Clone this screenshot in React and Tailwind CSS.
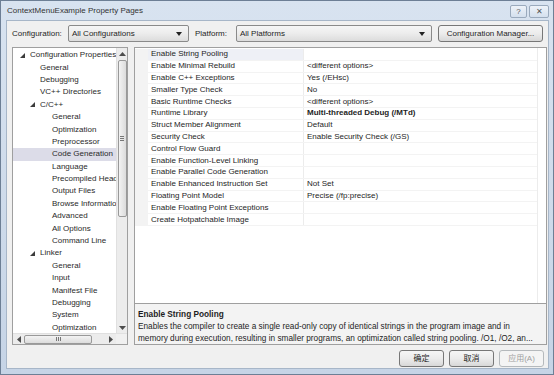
import React from 'react';

const font = { fontFamily: '"Liberation Sans", Arial, sans-serif' };

const treeItems = [
  { label: 'Configuration Properties', level: 0, open: true },
  { label: 'General', level: 1 },
  { label: 'Debugging', level: 1 },
  { label: 'VC++ Directories', level: 1 },
  { label: 'C/C++', level: 1, open: true },
  { label: 'General', level: 2 },
  { label: 'Optimization', level: 2 },
  { label: 'Preprocessor', level: 2 },
  { label: 'Code Generation', level: 2, selected: true },
  { label: 'Language', level: 2 },
  { label: 'Precompiled Headers', level: 2 },
  { label: 'Output Files', level: 2 },
  { label: 'Browse Information', level: 2 },
  { label: 'Advanced', level: 2 },
  { label: 'All Options', level: 2 },
  { label: 'Command Line', level: 2 },
  { label: 'Linker', level: 1, open: true },
  { label: 'General', level: 2 },
  { label: 'Input', level: 2 },
  { label: 'Manifest File', level: 2 },
  { label: 'Debugging', level: 2 },
  { label: 'System', level: 2 },
  { label: 'Optimization', level: 2 },
];

const props = [
  ['Enable String Pooling', ''],
  ['Enable Minimal Rebuild', '<different options>'],
  ['Enable C++ Exceptions', 'Yes (/EHsc)'],
  ['Smaller Type Check', 'No'],
  ['Basic Runtime Checks', '<different options>'],
  ['Runtime Library', 'Multi-threaded Debug (/MTd)', true],
  ['Struct Member Alignment', 'Default'],
  ['Security Check', 'Enable Security Check (/GS)'],
  ['Control Flow Guard', ''],
  ['Enable Function-Level Linking', ''],
  ['Enable Parallel Code Generation', ''],
  ['Enable Enhanced Instruction Set', 'Not Set'],
  ['Floating Point Model', 'Precise (/fp:precise)'],
  ['Enable Floating Point Exceptions', ''],
  ['Create Hotpatchable Image', ''],
];

const Expander = () => (
  <svg width="5" height="5" viewBox="0 0 5 5" className="shrink-0">
    <polygon points="5,0 5,5 0,5" fill="#3c3c3c" />
  </svg>
);

const Arrow = ({ dir }) => {
  const pts = {
    up: '0,4 3.5,0 7,4',
    down: '0,0 7,0 3.5,4',
    left: '4,0 4,7 0,3.5',
    right: '0,0 0,7 4,3.5',
  }[dir];
  const vertical = dir === 'up' || dir === 'down';
  return (
    <svg width={vertical ? 7 : 4} height={vertical ? 4 : 7} viewBox={vertical ? '0 0 7 4' : '0 0 4 7'}>
      <polygon points={pts} fill="#4d4d4d" />
    </svg>
  );
};

const Combo = ({ value, className }) => (
  <div className={`flex items-center h-[17px] border border-[#8a8a8a] rounded-[2px] bg-gradient-to-b from-[#f6f6f6] via-[#ececec] to-[#dcdcdc] pl-[3px] pr-[6px] ${className}`}>
    <span className="flex-1 text-[8px] text-[#1e1e1e]">{value}</span>
    <svg width="6" height="4" viewBox="0 0 6 4"><polygon points="0,0 6,0 3,4" fill="#222" /></svg>
  </div>
);

const Button = ({ children, disabled, className = '' }) => (
  <div className={`flex items-center justify-center h-[17px] rounded-[3px] border text-[8px] ${disabled ? 'border-[#b5b9bc] bg-[#f4f4f4] text-[#a0a0a0]' : 'border-[#777] bg-gradient-to-b from-[#f6f6f6] via-[#ececec] to-[#d8d8d8] text-[#1e1e1e]'} ${className}`}>
    {children}
  </div>
);

export default function App() {
  return (
    <div style={font} className="w-[554px] h-[375px] flex flex-col bg-gradient-to-b from-[#d8e3f0] to-[#c6d4e6] border border-[#6d7f95] overflow-hidden">
      {/* title bar */}
      <div className="h-[19px] flex items-center pl-[6px] pr-[4px] shrink-0">
        <span className="flex-1 text-[8px] text-[#333]">ContextMenuExample Property Pages</span>
        <div className="flex gap-[2px] mt-[2px]">
          <div className="w-[17px] h-[13px] border border-[#9aaabd] rounded-[2px] bg-gradient-to-b from-[#eef3f9] to-[#d4e0ee] flex items-center justify-center text-[8px] text-[#555]">?</div>
          <div className="w-[20px] h-[13px] border border-[#9aaabd] rounded-[2px] bg-gradient-to-b from-[#eef3f9] to-[#d4e0ee] flex items-center justify-center text-[8px] text-[#555]">✕</div>
        </div>
      </div>

      {/* dialog body */}
      <div className="ml-[5px] mr-[4px] h-[349px] bg-[#f0f0f0] border border-[#a7b6c8] flex flex-col text-[8px] text-[#1e1e1e]">
        <div className="flex items-center mt-[4px] h-[17px] pl-[5px]">
          <span className="w-[56px]">Configuration:</span>
          <Combo value="All Configurations" className="w-[121px]" />
          <span className="w-[41px] ml-[6px]">Platform:</span>
          <Combo value="All Platforms" className="w-[196px]" />
          <Button className="w-[105px] ml-[6px]">Configuration Manager...</Button>
        </div>

        <div className="flex mt-[5px] h-[298px] pl-[5px] gap-[6px]">
          {/* tree */}
          <div className="w-[116px] h-full border border-[#9f9f9f] bg-white flex flex-col">
            <div className="flex flex-1 min-h-0">
              <div className="flex-1 overflow-hidden pt-[1px]">
                {treeItems.map((it, i) => (
                  <div
                    key={i}
                    className={`h-[12.4px] flex items-center whitespace-nowrap ${it.selected ? 'bg-[#dcdce8]' : ''}`}
                    style={{ paddingLeft: it.level === 0 ? 7 : it.level === 1 ? (it.open ? 17 : 27) : 39 }}
                  >
                    {it.open && <span className="mr-[5px] flex"><Expander /></span>}
                    <span className="text-[#2a2a2a]">{it.label}</span>
                  </div>
                ))}
              </div>
              {/* vertical scrollbar */}
              <div className="w-[11px] bg-[#ececec] border-l border-[#e0e0e0] flex flex-col items-center">
                <div className="h-[11px] flex items-center justify-center"><Arrow dir="up" /></div>
                <div className="w-[9px] h-[157px] mt-[1px] border border-[#999] rounded-[2px] bg-gradient-to-r from-[#f3f3f3] to-[#dcdcdc] flex items-center justify-center">
                  <div className="flex flex-col gap-[1px]">
                    <div className="w-[4px] h-px bg-[#777]" />
                    <div className="w-[4px] h-px bg-[#777]" />
                    <div className="w-[4px] h-px bg-[#777]" />
                  </div>
                </div>
                <div className="flex-1" />
                <div className="h-[11px] flex items-center justify-center"><Arrow dir="down" /></div>
              </div>
            </div>
            {/* horizontal scrollbar */}
            <div className="h-[11px] flex bg-[#ececec] border-t border-[#e0e0e0]">
              <div className="flex-1 flex items-center">
                <div className="w-[11px] flex justify-center"><Arrow dir="left" /></div>
                <div className="w-[68px] h-[9px] border border-[#999] rounded-[2px] bg-gradient-to-b from-[#f3f3f3] to-[#dcdcdc] flex items-center justify-center">
                  <div className="flex gap-[1px]">
                    <div className="w-px h-[4px] bg-[#777]" />
                    <div className="w-px h-[4px] bg-[#777]" />
                    <div className="w-px h-[4px] bg-[#777]" />
                  </div>
                </div>
                <div className="flex-1" />
                <div className="w-[11px] flex justify-center"><Arrow dir="right" /></div>
              </div>
              <div className="w-[11px] bg-[#f0f0f0]" />
            </div>
          </div>

          {/* property grid + description */}
          <div className="w-[413px] h-full flex flex-col">
            <div className="h-[257px] border border-[#9f9f9f] bg-white flex">
              <div className="flex-1 pt-[1px]">
                {props.map(([name, value, bold], i) => (
                  <div key={i} className="h-[11.8px] flex border-b border-[#f3f3f3]">
                    <div className="w-[13px] bg-[#f3f3f3]" />
                    <div className={`w-[156px] pl-[3px] flex items-center border-r border-[#ececec] ${i === 0 ? 'bg-[#eef0f6]' : ''}`}>
                      {name}
                    </div>
                    <div className={`flex-1 pl-[3px] flex items-center ${bold ? 'font-bold' : ''}`}>{value}</div>
                  </div>
                ))}
              </div>
              <div className="w-[9px] border-l border-[#ececec]" />
            </div>
            <div className="h-[41px] border border-t-0 border-[#9f9f9f] bg-[#f3f3f3] px-[3px] pt-[5px] leading-[12px] text-[8.25px] whitespace-nowrap overflow-hidden">
              <div className="font-bold">Enable String Pooling</div>
              <div>Enables the compiler to create a single read-only copy of identical strings in the program image and in</div>
              <div>memory during execution, resulting in smaller programs, an optimization called string pooling. /O1, /O2, an...</div>
            </div>
          </div>
        </div>

        <div className="flex justify-end gap-[5px] mt-[5px] pr-[4px]" style={{ fontFamily: '"Liberation Sans", "Noto Sans CJK SC", sans-serif' }}>
          <Button className="w-[45px]">确定</Button>
          <Button className="w-[45px]">取消</Button>
          <Button className="w-[45px]" disabled>应用(A)</Button>
        </div>
      </div>
    </div>
  );
}
